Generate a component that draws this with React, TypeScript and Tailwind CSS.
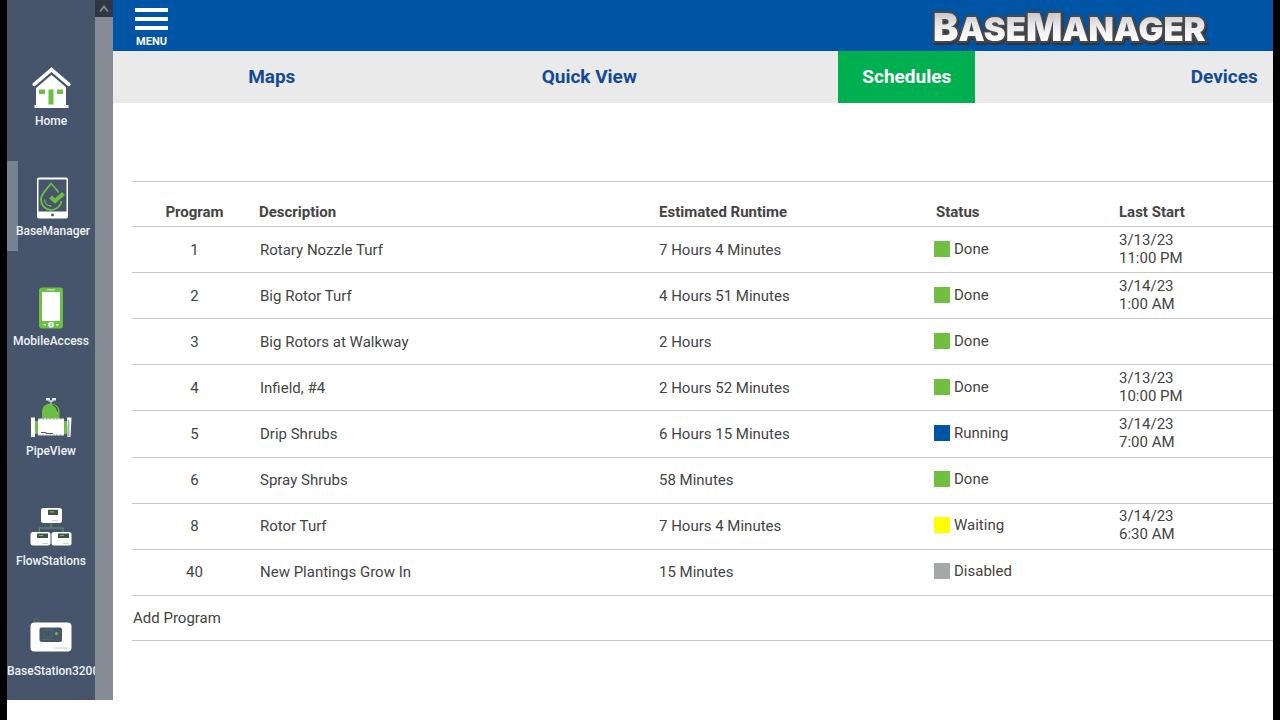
import type { ReactNode } from "react";

const GREEN = "#6dbe45";

function HomeIcon() {
  return (
    <svg viewBox="0 0 42 42" className="h-[42px] w-[42px]" aria-hidden="true">
      <path d="M6 18 21.500 6.500 36 18V39H6Z" fill="#fff" />
      <path d="M4 18.500 21.500 3.500 39 18.500" fill="none" stroke="#46556b" strokeWidth="6.500" />
      <path d="M4.200 17.300 21.500 2.700 38.800 17.300" fill="none" stroke="#fff" strokeWidth="3.600" strokeLinecap="round" />
      <path d="M9 22.500h6v4.500H9zM27 22.500h6v4.500h-6zM18.500 22.500h5v15h-5z" fill={GREEN} />
      <path d="M4.500 38h34v3h-34z" fill="#fff" />
    </svg>
  );
}

function TabletIcon() {
  return (
    <svg viewBox="0 0 42 42" className="h-[42px] w-[42px]" aria-hidden="true">
      <rect x="5" y="0.500" width="31" height="41" rx="2" fill="#fff" />
      <path d="M6.500 2.500h28v32h-28z" fill="#46556b" />
      <circle cx="20.500" cy="38" r="1.400" fill="#46556b" />
      <path d="M26.500 15.500C25 12.500 21.500 9.500 19 6.500 15.500 11.500 9 16.500 9 22.500a10.300 10.300 0 0 0 20.500 1.500" fill="none" stroke={GREEN} strokeWidth="1.800" />
      <path d="M12.500 22.500c0 4 3 6.500 7 6.500" fill="none" stroke={GREEN} strokeWidth="1.300" />
      <path d="m18.500 20 4.500 4 8.500-7.500" fill="none" stroke={GREEN} strokeWidth="4" />
    </svg>
  );
}

function PhoneIcon() {
  return (
    <svg viewBox="0 0 42 42" className="h-[42px] w-[42px]" aria-hidden="true">
      <rect x="9" y="0.500" width="24" height="41" rx="3" fill={GREEN} />
      <path d="M12 5h18v29H12z" fill="#fff" />
      <path d="M17 2.800h8" stroke="#d9f0cd" strokeWidth="1" />
      <circle cx="21" cy="37.700" r="2.800" fill="#fff" />
      <path d="M20.300 36.200h1.400v3h-1.400z" fill={GREEN} />
      <path d="M13.500 37.700h2.500M26 37.700h2.500" stroke="#d9f0cd" strokeWidth="1.500" />
    </svg>
  );
}

function PipeIcon() {
  return (
    <svg viewBox="0 0 42 42" className="h-[42px] w-[42px]" aria-hidden="true">
      <path d="M16 2.300h4M22 2.300h4" stroke="#e6eaf0" strokeWidth="2.400" />
      <path d="M21 3v5M18.500 4h5" stroke="#cbd2dc" strokeWidth="1.300" />
      <path d="M12 22v-7.500C12 9.500 16 6.500 20.500 6.500S29.500 9.500 29.500 14.500V22Z" fill={GREEN} />
      <path d="M22.500 8c3.500 1.200 5 3.500 5 6.500" fill="none" stroke="#39513f" strokeWidth="1.200" />
      <path d="M5 24h4v13H5zM33 24h4v13h-4z" fill={GREEN} />
      <path d="M8 21.500h26v17H8z" fill="#fff" />
      <path d="M8.500 22h25M8.500 38h25" fill="none" stroke="#5c687a" strokeWidth="0.600" strokeDasharray="2 1.500" />
      <path d="M1 20.500h4V40H1zM37 20.500h4.500L40.500 40h-3z" fill="#fff" />
      <path d="M38.800 23v16" stroke="#46556b" strokeWidth="0.700" />
      <path d="M11 35.500h4l2 1h6" fill="none" stroke="#46556b" strokeWidth="1.100" />
    </svg>
  );
}

function StationsIcon() {
  return (
    <svg viewBox="0 0 42 42" className="h-[42px] w-[42px]" aria-hidden="true">
      <path d="M21 16v5M9.500 26v-5H33v5" fill="none" stroke="#5aa05a" strokeWidth="1.100" />
      <rect x="11" y="1" width="21" height="15" rx="2.500" fill="#fff" />
      <rect x="0.500" y="25" width="20" height="13.500" rx="2.500" fill="#fff" />
      <rect x="21.500" y="25" width="20" height="13.500" rx="2.500" fill="#fff" />
      <path d="M18 2.800h10v5.200H18zM7 26.500h11v4.500H7zM28 26.500h11v4.500H28z" fill="#3f5547" />
      <path d="M20 4.800h4M9 28.500h4M30 28.500h4" stroke={GREEN} strokeWidth="1.200" />
      <path d="M22 13.500h6M12 36.500h6M33 36.500h6" stroke="#b5dca4" strokeWidth="0.900" />
    </svg>
  );
}

function ControllerIcon() {
  return (
    <svg viewBox="0 0 42 42" className="h-[42px] w-[42px]" aria-hidden="true">
      <rect x="4.500" y="1" width="3.500" height="6" rx="1.500" fill="none" stroke="#527a55" strokeWidth="1" />
      <rect x="0.500" y="5.500" width="41" height="29" rx="4" fill="#fff" />
      <rect x="9.500" y="10.500" width="22.500" height="14.500" rx="2" fill="#46556b" />
      <path d="M14 13h8v7h-8zM12 22.500h12" fill="none" stroke="#41725a" strokeWidth="1" />
      <circle cx="26.500" cy="16.500" r="1.500" fill={GREEN} />
      <path d="M25 31h13" stroke="#b5dca4" strokeWidth="1" />
    </svg>
  );
}

const sideItems: { label: string; icon: ReactNode }[] = [
  { label: "Home", icon: <HomeIcon /> },
  { label: "BaseManager", icon: <TabletIcon /> },
  { label: "MobileAccess", icon: <PhoneIcon /> },
  { label: "PipeView", icon: <PipeIcon /> },
  { label: "FlowStations", icon: <StationsIcon /> },
  { label: "BaseStation3200", icon: <ControllerIcon /> },
];

const tabs = ["Maps", "Quick View", "Schedules", "Devices"];

const statusColors = {
  Done: "bg-[#70bf41]",
  Running: "bg-[#0054a6]",
  Waiting: "bg-[#ffff00]",
  Disabled: "bg-[#a6a8a7]",
};

type Program = {
  id: number;
  description: string;
  runtime: string;
  status: keyof typeof statusColors;
  date?: string;
  time?: string;
};

const programs: Program[] = [
  { id: 1, description: "Rotary Nozzle Turf", runtime: "7 Hours 4 Minutes", status: "Done", date: "3/13/23", time: "11:00 PM" },
  { id: 2, description: "Big Rotor Turf", runtime: "4 Hours 51 Minutes", status: "Done", date: "3/14/23", time: "1:00 AM" },
  { id: 3, description: "Big Rotors at Walkway", runtime: "2 Hours", status: "Done" },
  { id: 4, description: "Infield, #4", runtime: "2 Hours 52 Minutes", status: "Done", date: "3/13/23", time: "10:00 PM" },
  { id: 5, description: "Drip Shrubs", runtime: "6 Hours 15 Minutes", status: "Running", date: "3/14/23", time: "7:00 AM" },
  { id: 6, description: "Spray Shrubs", runtime: "58 Minutes", status: "Done" },
  { id: 8, description: "Rotor Turf", runtime: "7 Hours 4 Minutes", status: "Waiting", date: "3/14/23", time: "6:30 AM" },
  { id: 40, description: "New Plantings Grow In", runtime: "15 Minutes", status: "Disabled" },
];

function Sidebar() {
  return (
    <aside className="flex shrink-0 self-start bg-[#868b96]">
      <nav className="w-[88px] overflow-hidden bg-[#46556b] pt-[51px]">
        {sideItems.map(({ label, icon }) => (
          <a
            key={label}
            href="#"
            aria-current={label === "BaseManager" ? "page" : undefined}
            className="relative flex h-[110px] flex-col items-center pt-4 text-xs font-medium text-[#eef1f5] last:h-[99px] aria-[current=page]:pl-1"
          >
            {label === "BaseManager" && <span className="absolute top-0 left-0 h-[90px] w-[11px] bg-[#768193]" />}
            {icon}
            <span className="relative mt-1 max-w-full leading-4 whitespace-nowrap">{label}</span>
          </a>
        ))}
      </nav>
      <div className="w-[18px]">
        <button type="button" aria-label="Scroll up" className="flex h-[17px] w-full items-center justify-center bg-[#2f3542]">
          <svg viewBox="0 0 10 8" className="h-2 w-[10px]" aria-hidden="true">
            <path d="m1 6.500 4-5 4 5" fill="none" stroke="#858b96" strokeWidth="1.800" />
          </svg>
        </button>
      </div>
    </aside>
  );
}

function Logo() {
  return (
    <svg viewBox="0 0 290 44" className="h-[44px] w-[290px] drop-shadow-[1px_2px_0_#333438]" role="img" aria-label="BaseManager">
      <defs>
        <linearGradient id="chrome" x1="0" y1="0" x2="0" y2="1">
          <stop offset="0.200" stopColor="#c9c9cc" />
          <stop offset="0.500" stopColor="#ececee" />
          <stop offset="0.800" stopColor="#ffffff" />
        </linearGradient>
      </defs>
      <text
        x="4"
        y="35"
        fontFamily="Inter, sans-serif"
        fontWeight="900"
        fontSize="33"
        fill="url(#chrome)"
        stroke="#47484c"
        strokeWidth="4"
        paintOrder="stroke"
      >
        <tspan fontSize="38">B</tspan>ASE<tspan fontSize="38">M</tspan>ANAGER
      </text>
    </svg>
  );
}

export default function App() {
  return (
    <div className="flex min-h-screen overflow-hidden border-x-[7px] border-black bg-white font-[Roboto,sans-serif] text-[#444]">
      <Sidebar />
      <div className="min-w-0 flex-1 overflow-hidden">
        <header className="flex h-[51px] items-start justify-between bg-[#0054a6] pr-[54px] pl-[22px]">
          <button type="button" className="flex flex-col items-center pt-2 text-white">
            <span className="flex flex-col gap-[5px]">
              <span className="h-1 w-[33px] bg-white" />
              <span className="h-1 w-[33px] bg-white" />
              <span className="h-1 w-[33px] bg-white" />
            </span>
            <span className="mt-[6px] text-[11px] leading-3 font-bold">MENU</span>
          </button>
          <div className="pt-[6px]">
            <Logo />
          </div>
        </header>
        <nav className="bg-[#eaeaea]">
          <div className="grid w-[calc(100%+110px)] grid-cols-4 justify-items-center">
            {tabs.map((tab) => (
              <a
                key={tab}
                href="#"
                aria-current={tab === "Schedules" ? "page" : undefined}
                className="flex h-[52px] items-center px-6 text-[19px] font-bold text-[#134a96] aria-[current=page]:bg-[#00b050] aria-[current=page]:text-white"
              >
                {tab}
              </a>
            ))}
          </div>
        </nav>
        <main className="pt-[78px] pl-[19px]">
          <table className="h-[460px] w-full table-fixed border-collapse border-y border-[#c8c8c8] text-left text-[15px] leading-[18px]">
            <colgroup>
              <col className="w-[125px]" />
              <col className="w-[400px]" />
              <col className="w-[277px]" />
              <col className="w-[183px]" />
              <col className="w-[156px]" />
            </colgroup>
            <thead>
              <tr className="h-[45px] border-b border-[#c8c8c8]">
                <th className="pt-4 text-center">Program</th>
                <th className="pt-4 pl-[2px]">Description</th>
                <th className="pt-4 pl-[2px]">Estimated Runtime</th>
                <th className="pt-4 pl-[2px]">Status</th>
                <th className="pt-4 pl-[2px]">Last Start</th>
              </tr>
            </thead>
            <tbody>
              {programs.map((p) => (
                <tr key={p.id} className="h-[46px] border-b border-[#c8c8c8]">
                  <td className="text-center">{p.id}</td>
                  <td className="pl-[3px]">{p.description}</td>
                  <td className="pl-[2px]">{p.runtime}</td>
                  <td className="pb-[2px]">
                    <span className="flex items-center gap-1">
                      <span className={`h-4 w-4 ${statusColors[p.status]}`} />
                      {p.status}
                    </span>
                  </td>
                  <td className="pb-[2px] pl-[2px]">
                    {p.date && (
                      <>
                        {p.date}
                        <br />
                        {p.time}
                      </>
                    )}
                  </td>
                </tr>
              ))}
              <tr className="h-[45px]">
                <td colSpan={5}>
                  <button type="button" className="pl-px">Add Program</button>
                </td>
              </tr>
            </tbody>
          </table>
        </main>
      </div>
    </div>
  );
}
